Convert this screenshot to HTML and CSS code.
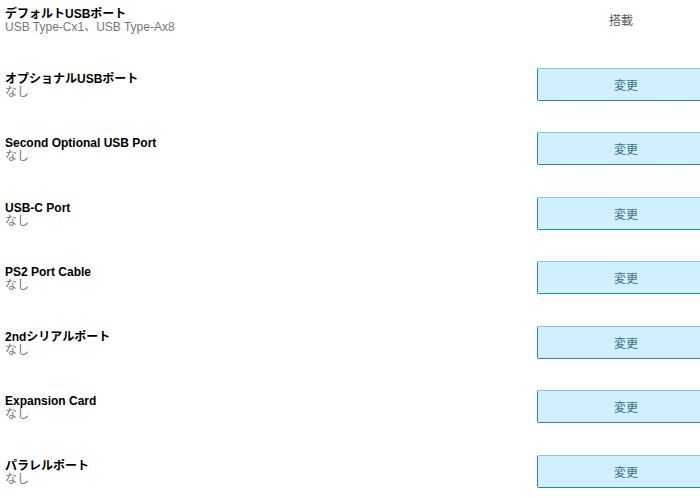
FILE: index.html
```html
<!DOCTYPE html>
<html>
    <head>
        <meta charset="utf-8">
        <title>ポート設定</title>
        <link rel="stylesheet" href="styles.css">
    </head>
    <body>
        <div class="options">
            <div class="row">
                <div class="label">
                    <p class="name">デフォルトUSBポート</p>
                    <p class="value">USB Type-Cx1、USB Type-Ax8</p>
                </div>
                <div class="action">
                    <span class="fixed">搭載</span>
                </div>
            </div>

            <div class="row">
                <div class="label">
                    <p class="name">オプショナルUSBポート</p>
                    <p class="value">なし</p>
                </div>
                <div class="action">
                    <button type="button">変更</button>
                </div>
            </div>

            <div class="row">
                <div class="label">
                    <p class="name">Second Optional USB Port</p>
                    <p class="value">なし</p>
                </div>
                <div class="action">
                    <button type="button">変更</button>
                </div>
            </div>

            <div class="row">
                <div class="label">
                    <p class="name">USB-C Port</p>
                    <p class="value">なし</p>
                </div>
                <div class="action">
                    <button type="button">変更</button>
                </div>
            </div>

            <div class="row">
                <div class="label">
                    <p class="name">PS2 Port Cable</p>
                    <p class="value">なし</p>
                </div>
                <div class="action">
                    <button type="button">変更</button>
                </div>
            </div>

            <div class="row">
                <div class="label">
                    <p class="name">2ndシリアルポート</p>
                    <p class="value">なし</p>
                </div>
                <div class="action">
                    <button type="button">変更</button>
                </div>
            </div>

            <div class="row">
                <div class="label">
                    <p class="name">Expansion Card</p>
                    <p class="value">なし</p>
                </div>
                <div class="action">
                    <button type="button">変更</button>
                </div>
            </div>

            <div class="row">
                <div class="label">
                    <p class="name">パラレルポート</p>
                    <p class="value">なし</p>
                </div>
                <div class="action">
                    <button type="button">変更</button>
                </div>
            </div>
        </div>
    </body>
</html>
```

FILE: styles.css
```css
html,
body {
    margin: 0;
    padding: 0;
    overflow: hidden;
}

body {
    font-family: "Liberation Sans", Arial, "Noto Sans CJK JP", sans-serif;
    font-size: 12px;
    background-color: #fff;
    color: #000;
}

p {
    margin: 0;
}

.options {
    width: 715px;
    padding-top: 3px;
}

.row {
    display: flex;
    align-items: flex-start;
    height: 64.5px;
    padding-left: 5px;
}

.label {
    flex: 1;
    padding-top: 5px;
    line-height: 13px;
}

.name {
    font-weight: bold;
    color: #000;
}

.value {
    color: #777;
}

.action {
    width: 178px;
}

.fixed {
    display: flex;
    align-items: center;
    justify-content: center;
    height: 33px;
    padding-right: 10px;
    color: #555;
}

.action button {
    display: block;
    width: 100%;
    height: 33px;
    margin: 0;
    padding: 0;
    font-family: inherit;
    font-size: 12px;
    color: #3a6f8a;
    background-color: #d1f0fd;
    border: 1px solid #2388ad;
    border-top-color: #8cc4d8;
    border-radius: 2px;
}
```
